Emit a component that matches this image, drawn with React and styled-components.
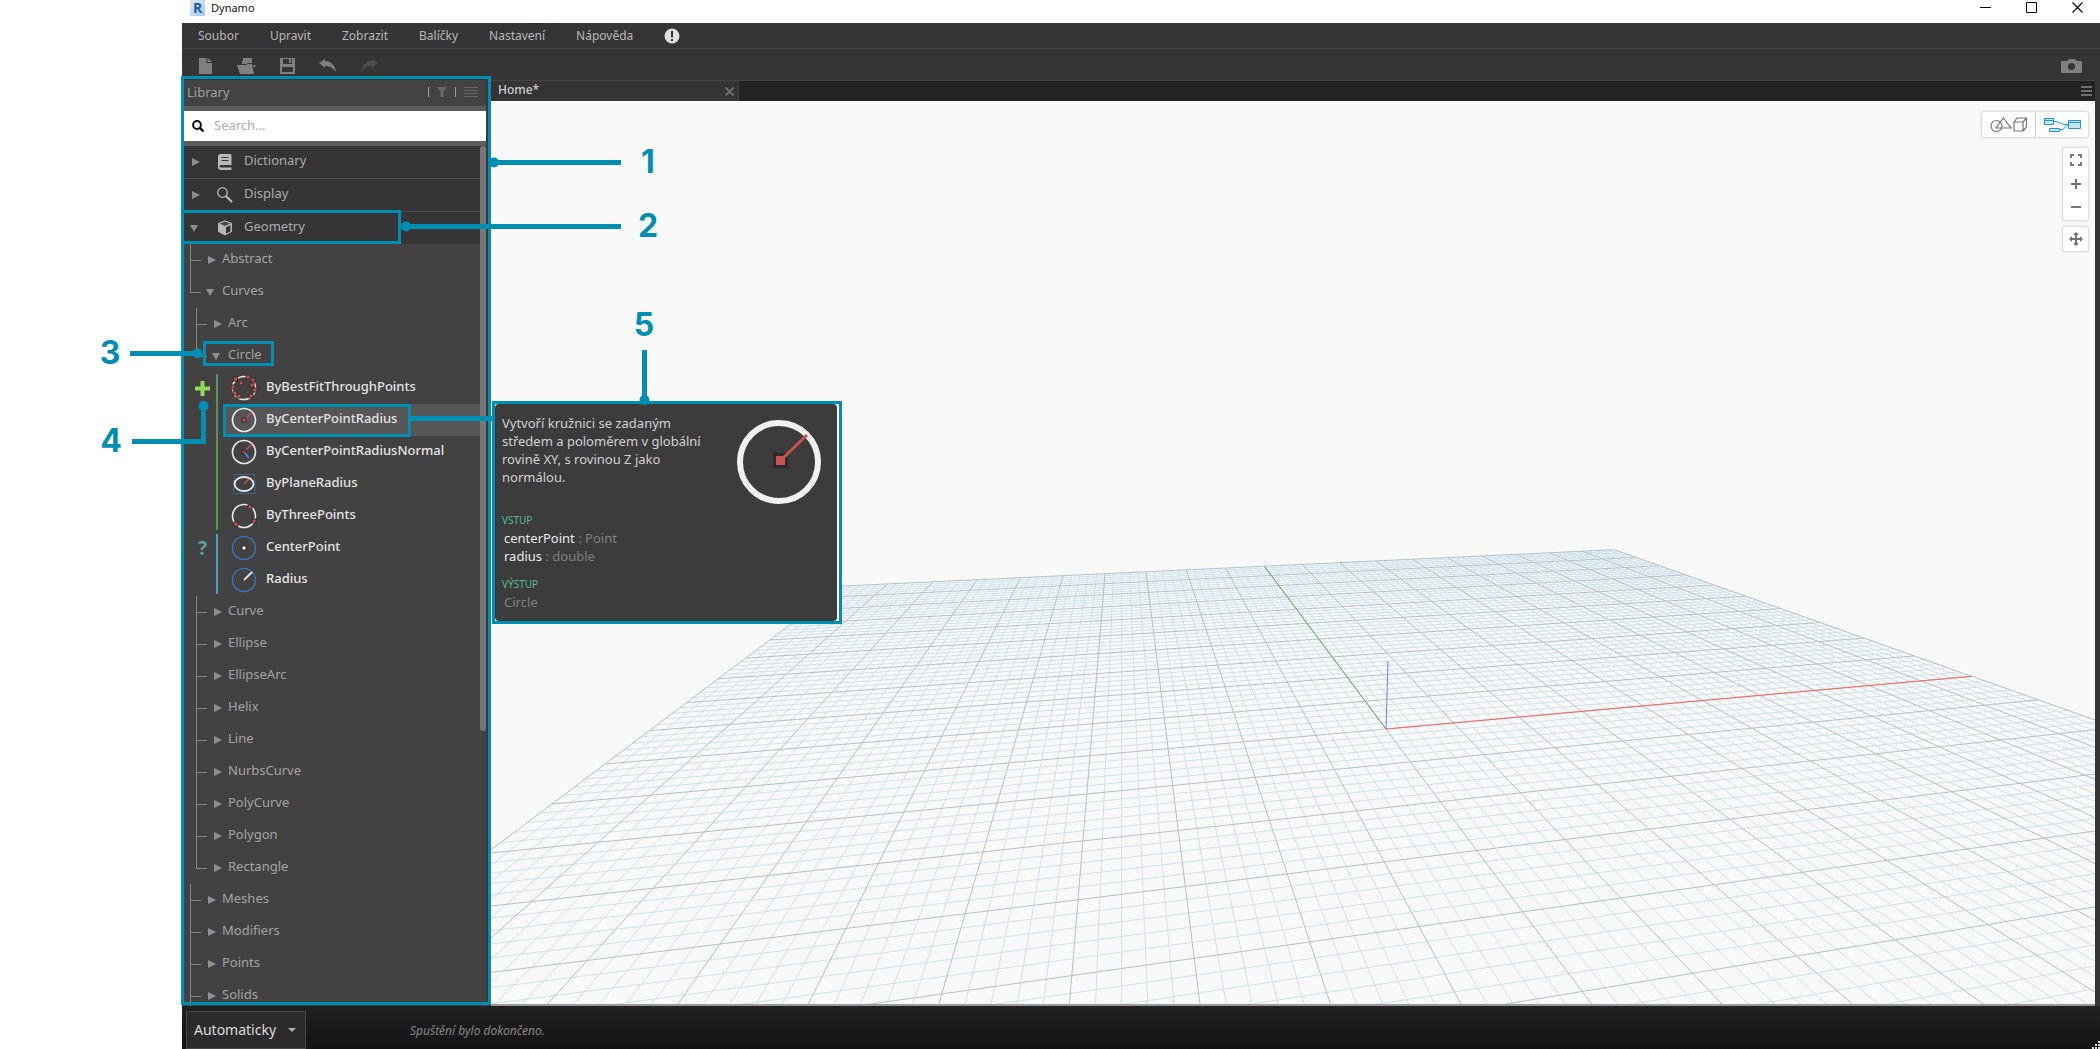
import React from "react";
import styled, { createGlobalStyle, css } from "styled-components";

const ACCENT = "#008eb3";

const GlobalStyle = createGlobalStyle`
  *, *::before, *::after { box-sizing: border-box; }
  body {
    margin: 0;
    background: #fff;
    font-family: "Noto Sans", "Open Sans", sans-serif;
    font-size: 13px;
    color: #b8b8b8;
  }
  button, input, select { font: inherit; color: inherit; margin: 0; }
  button { border: 0; background: none; padding: 0; text-align: left; cursor: pointer; }
  ul { list-style: none; margin: 0; padding: 0; }
  svg { display: block; flex: none; }
`;

/* ---------- shell ---------- */

const Page = styled.div`
  position: relative;
  height: 100vh;
  padding-left: 182px;
  overflow: hidden;
`;

const Window = styled.div`
  display: flex;
  flex-direction: column;
  height: 100%;
  background: #353535;
`;

const TitleBar = styled.header`
  display: flex;
  align-items: flex-start;
  height: 23px;
  padding-left: 8px;
  background: #fff;
  color: #111;
`;

const Logo = styled.span`
  width: 15px;
  height: 16px;
  background: linear-gradient(135deg, #dbe9f6, #a9cbea);
  color: #1d5c9e;
  font-family: "Open Sans", sans-serif;
  font-size: 14px;
  font-weight: 700;
  line-height: 16px;
  text-align: center;
`;

const Title = styled.h1`
  flex: 1;
  margin: 0 0 0 6px;
  font-size: 11px;
  font-weight: 400;
  line-height: 16px;
`;

const WindowButton = styled.button`
  display: grid;
  place-items: center;
  width: 46px;
  height: 15px;
`;

const MenuBar = styled.nav`
  display: flex;
  align-items: center;
  gap: 31px;
  height: 26px;
  padding-left: 16px;
  border-bottom: 1px solid #434343;
  font-size: 12px;
`;

const ToolBar = styled.div`
  display: flex;
  align-items: center;
  gap: 23px;
  height: 31px;
  padding: 2px 18px 0 16px;
  color: #808080;
`;

const Spacer = styled.span`
  flex: 1;
`;

const Body = styled.main`
  display: grid;
  grid-template-columns: 309px minmax(0, 1fr);
  flex: 1;
  min-height: 0;
`;

/* ---------- library ---------- */

const Library = styled.aside`
  position: relative;
  display: flex;
  flex-direction: column;
  min-height: 0;
  padding: 0 5px 0 2px;
  background: #3a3a3a;
  &::after {
    content: "";
    position: absolute;
    inset: -4px 0 1px -1px;
    border: 3px solid ${ACCENT};
    pointer-events: none;
  }
`;

const LibraryHeader = styled.div`
  display: flex;
  align-items: center;
  gap: 8px;
  height: 26px;
  padding: 0 8px 2px 3px;
  background: #434343;
  color: #a0a0a0;
`;

const LibraryTitle = styled.h2`
  flex: 1;
  margin: 0;
  font-size: 13px;
  font-weight: 400;
  line-height: 18px;
`;

const Divider = styled.span`
  width: 1px;
  height: 10px;
  background: #a0a0a0;
`;

const SearchBox = styled.label`
  display: flex;
  align-items: center;
  gap: 10px;
  height: 40px;
  padding: 0 8px;
  border: solid #5c5c5c;
  border-width: 5px 0;
  background: #fff;
  color: #111;
`;

const SearchInput = styled.input`
  flex: 1;
  min-width: 0;
  border: 0;
  padding: 0 0 2px;
  outline: 0;
  background: transparent;
  line-height: 18px;
  &::placeholder { color: #ababab; }
`;

const Scroller = styled.div`
  position: relative;
  flex: 1;
  min-height: 0;
  overflow: hidden;
  background: #424242;
`;

const ScrollThumb = styled.span`
  position: absolute;
  top: 0;
  right: 0;
  width: 6px;
  height: 68%;
  border-radius: 3px;
  background: #777;
`;

const Category = styled.button`
  position: relative;
  display: flex;
  align-items: center;
  width: 100%;
  height: ${(p) => (p.$open ? 32 : 33)}px;
  padding-left: 6px;
  border-bottom: ${(p) => (p.$open ? "0" : "1px solid #4c4c4c")};
  background: #353535;
  line-height: 18px;
  color: #ababab;
  ${(p) =>
    p.$framed &&
    css`
      &::after {
        content: "";
        position: absolute;
        inset: -2px 85px 0 -3px;
        border: 3px solid ${ACCENT};
      }
    `}
`;

const CategoryIcon = styled.span`
  display: grid;
  place-items: center;
  width: 16px;
  margin: 0 11px 0 17px;
`;

const TreeRow = styled.li`
  display: flex;
  height: 32px;
  padding-left: ${(p) => (p.$level === 1 ? 6 : 12)}px;
`;

const Branch = styled.span`
  position: relative;
  width: 11px;
  &::before {
    content: "";
    position: absolute;
    left: 0;
    top: 0;
    width: 1px;
    height: ${(p) => (p.$last ? "17px" : "100%")};
    background: #858585;
  }
  &::after {
    content: "";
    position: absolute;
    left: 0;
    top: 16px;
    width: 11px;
    height: 1px;
    background: #858585;
  }
`;

const TreeButton = styled.button`
  position: relative;
  display: flex;
  align-items: center;
  margin-left: 5px;
  padding-right: 6px;
  line-height: 18px;
  color: #a3a3a3;
  ${(p) =>
    p.$framed &&
    css`
      &::after {
        content: "";
        position: absolute;
        inset: 1px -6px 6px -9px;
        border: 3px solid ${ACCENT};
      }
    `}
`;

const ArrowBox = styled.span`
  display: flex;
  width: 10px;
  padding-left: ${(p) => (p.$open ? 0 : 2)}px;
`;

const Label = styled.span`
  padding: 0 0 4px ${(p) => p.$gap || 0}px;
`;

const MethodGroup = styled.li`
  display: grid;
  grid-template-columns: 32px 2px 1fr;
  padding-right: 6px;
`;

const GroupMark = styled.span`
  display: grid;
  place-items: center;
  height: 32px;
  padding-left: 5px;
  color: ${(p) => p.$color};
  font-size: 19px;
  font-weight: 700;
  line-height: 24px;
`;

const GroupBar = styled.span`
  margin: 2px 0;
  background: ${(p) => p.$color};
`;

const Method = styled.button`
  position: relative;
  display: flex;
  align-items: center;
  gap: 9px;
  width: calc(100% - 5px);
  height: 32px;
  margin-left: 5px;
  padding-left: 8px;
  background: ${(p) => (p.$active ? "#565656" : "transparent")};
  color: #e4e4e4;
  font-weight: 500;
  line-height: 18px;
  ${(p) =>
    p.$active &&
    css`
      &::after {
        content: "";
        position: absolute;
        inset: 0 69px -1px 0;
        border: 3px solid ${ACCENT};
      }
    `}
`;

/* ---------- workspace ---------- */

const Workspace = styled.section`
  display: flex;
  flex-direction: column;
  min-width: 0;
  min-height: 0;
  padding-right: 5px;
`;

const TabBar = styled.div`
  display: flex;
  align-items: center;
  height: 21px;
  padding-right: 3px;
  border-top: 1px solid #434343;
  background: #232323;
`;

const Tab = styled.div`
  display: flex;
  align-items: center;
  justify-content: space-between;
  width: 248px;
  height: 100%;
  padding: 0 4px 0 7px;
  border-right: 1px solid #434343;
  background: #353535;
  color: #d0d0d0;
  font-size: 12px;
  font-weight: 500;
  line-height: 16px;
`;

const TabName = styled.span`
  padding-bottom: 2px;
`;

const Canvas = styled.div`
  position: relative;
  flex: 1;
  min-height: 0;
  overflow: hidden;
  border-bottom: 2px solid #999;
  background: #f9f9f9;
`;

const Scene = styled.svg`
  width: 100%;
  height: 100%;
`;

const ViewTools = styled.div`
  position: absolute;
  top: 11px;
  right: 7px;
  display: flex;
  flex-direction: column;
  align-items: flex-end;
`;

const ToolCard = styled.div`
  display: flex;
  flex-direction: ${(p) => (p.$row ? "row" : "column")};
  margin-bottom: ${(p) => p.$gap || 0}px;
  border-radius: 2px;
  background: #fff;
  box-shadow: 0 0 2px 1px #d4d4d4;
  color: #757575;
`;

const ToolButton = styled.button`
  display: grid;
  place-items: center;
  width: ${(p) => (p.$wide ? 53 : 25)}px;
  height: ${(p) => (p.$wide ? 25 : 24)}px;
  border-left: ${(p) => (p.$divided ? "1px solid #cfcfcf" : "0")};
`;

/* ---------- tooltip ---------- */

const Tooltip = styled.div`
  position: absolute;
  left: 492px;
  top: 401px;
  width: 350px;
  height: 223px;
  border: 3px solid ${ACCENT};
  padding-right: 2px;
  background: #f9f9f9;
`;

const TooltipPanel = styled.div`
  height: 100%;
  padding: 10px 14px 0 7px;
  border-radius: 4px;
  background: #3c3c3c;
  color: #d2d2d2;
  line-height: 18px;
`;

const TooltipTop = styled.div`
  display: flex;
  justify-content: space-between;
  margin-bottom: 7px;
`;

const TooltipText = styled.p`
  width: 204px;
  margin: 0;
`;

const TooltipHeading = styled.h3`
  margin: 0;
  color: #5ab89c;
  font-size: 10px;
  font-weight: 400;
  line-height: 18px;
`;

const TooltipParam = styled.p`
  margin: 0;
  padding-left: 2px;
  color: #eaeaea;
`;

const TooltipType = styled.span`
  color: #808080;
`;

const TooltipBlock = styled.div`
  margin-bottom: 10px;
`;

/* ---------- status bar ---------- */

const StatusBar = styled.footer`
  display: flex;
  align-items: flex-end;
  justify-content: space-between;
  height: 43px;
  padding-left: 4px;
  background: linear-gradient(#222, #131313);
`;

const RunMode = styled.label`
  position: relative;
  width: 120px;
  height: 38px;
  svg { position: absolute; right: 10px; top: 17px; pointer-events: none; }
`;

const RunSelect = styled.select`
  width: 100%;
  height: 100%;
  padding: 0 0 2px 7px;
  border: 1px solid #474747;
  border-radius: 0;
  appearance: none;
  background: #2b2b2b;
  color: #dcdcdc;
  font-size: 14px;
`;

const Status = styled.p`
  flex: 1;
  margin: 0 0 9px 104px;
  color: #858585;
  font-size: 12px;
  font-style: italic;
  line-height: 18px;
`;

/* ---------- callouts ---------- */

const CalloutLines = styled.svg`
  position: absolute;
  left: 0;
  top: 0;
  pointer-events: none;
`;

const CalloutNumber = styled.span`
  position: absolute;
  left: ${(p) => p.$x}px;
  top: ${(p) => p.$y}px;
  width: 24px;
  color: ${ACCENT};
  font-family: Inter, "Open Sans", sans-serif;
  font-size: 32px;
  font-weight: 700;
  line-height: 32px;
  text-align: center;
`;

/* ---------- icons ---------- */

const Arrow = ({ open }) =>
  open ? (
    <svg width="8" height="7"><path d="M0 0h8L4 7z" fill="#8e8e8e" /></svg>
  ) : (
    <svg width="8" height="8"><path d="M0 0l8 4-8 4z" fill="#8e8e8e" /></svg>
  );

const categoryIcons = {
  Dictionary: (
    <svg width="14" height="16" viewBox="0 0 14 16">
      <path d="M2.500 0h9.500q1.500 0 1.500 1.500V11H3q-1.500 0-1.500 1.200T3 13.500h10.500V15q0 1-1 1H3q-3 0-3-3V2.500Q0 0 2.500 0z" fill="#b8b8b8" />
      <path d="M3.500 3.500h7M3.500 6.500h7" stroke="#353535" />
    </svg>
  ),
  Display: (
    <svg width="16" height="16" viewBox="0 0 16 16" fill="none" stroke="#b8b8b8">
      <circle cx="5.500" cy="5.500" r="4.800" strokeWidth="1.300" />
      <path d="M9 9l6 6" strokeWidth="2.200" />
    </svg>
  ),
  Geometry: (
    <svg width="16" height="16" viewBox="0 0 16 16" stroke="#b8b8b8" strokeLinejoin="round">
      <path d="M8 1l6.500 2.500v8L8 15 1.500 11.500v-8z" fill="#b8b8b8" />
      <path d="M8 1l6.500 2.500L8 6.500 1.500 3.500z" fill="#4a4a4a" />
      <path d="M8.500 7l5.500-2.500v7l-5.500 3z" fill="#353535" />
    </svg>
  ),
};

const Dot = ({ x, y, c = "#d94a4a" }) => (
  <g>
    <rect x={x - 2.5} y={y - 2.5} width="5" height="5" fill="#2d2d2d" />
    <rect x={x - 1.5} y={y - 1.5} width="3" height="3" fill={c} />
  </g>
);

const Ring = ({ color = "#e6e6e6", width = 1.7 }) => (
  <circle cx="13" cy="13" r="11.500" fill="none" stroke={color} strokeWidth={width} />
);

const methodIcons = {
  bestFit: (
    <>
      <Ring />
      {[[4.5, 4], [17, 2], [22, 5], [21, 10], [24, 15], [20, 21], [8, 21], [4, 18], [2, 12], [10, 8]].map(([x, y]) => (
        <Dot key={`${x}-${y}`} x={x} y={y} />
      ))}
    </>
  ),
  radius: (
    <>
      <Ring />
      <path d="M13 13l8-8" stroke="#d05050" strokeWidth="1.300" />
      <Dot x={13} y={13} />
    </>
  ),
  normal: (
    <>
      <Ring />
      <path d="M13 13l8-8" stroke="#d05050" strokeWidth="1.300" />
      <Dot x={13} y={13} c="#a84040" />
      <path d="M14 14l4 5" stroke="#3f86d0" strokeWidth="2" />
    </>
  ),
  plane: (
    <>
      <path d="M3.500 3.500h20l.5 19H2.500z" fill="none" stroke="#3f7fc4" strokeDasharray="1.500 1" />
      <ellipse cx="13" cy="13" rx="9.500" ry="7" fill="none" stroke="#e6e6e6" strokeWidth="1.800" />
      <path d="M13 13l5-5" stroke="#d05050" strokeWidth="1.300" />
    </>
  ),
  three: (
    <>
      <Ring />
      <Dot x={19} y={4} />
      <Dot x={23} y={18} />
      <Dot x={5} y={21} />
    </>
  ),
  center: (
    <>
      <Ring color="#3d6fa8" width={1.5} />
      <Dot x={13} y={13} c="#fff" />
    </>
  ),
  radiusQuery: (
    <>
      <Ring color="#3d6fa8" width={1.5} />
      <path d="M13 13l8-8" stroke="#e6e6e6" strokeWidth="1.800" />
    </>
  ),
};

/* ---------- data ---------- */

const categories = [
  { name: "Dictionary" },
  { name: "Display" },
  { name: "Geometry", open: true, framed: true },
];

const tree = [
  { name: "Abstract", level: 1 },
  { name: "Curves", level: 1, open: true, last: true },
  { name: "Arc", level: 2 },
  { name: "Circle", level: 2, open: true, last: true, framed: true },
  {
    mark: "plus",
    color: "#5f8f5a",
    methods: [
      { name: "ByBestFitThroughPoints", icon: "bestFit" },
      { name: "ByCenterPointRadius", icon: "radius", active: true },
      { name: "ByCenterPointRadiusNormal", icon: "normal" },
      { name: "ByPlaneRadius", icon: "plane" },
      { name: "ByThreePoints", icon: "three" },
    ],
  },
  {
    mark: "query",
    color: "#4a9cc4",
    methods: [
      { name: "CenterPoint", icon: "center" },
      { name: "Radius", icon: "radiusQuery" },
    ],
  },
  { name: "Curve", level: 2 },
  { name: "Ellipse", level: 2 },
  { name: "EllipseArc", level: 2 },
  { name: "Helix", level: 2 },
  { name: "Line", level: 2 },
  { name: "NurbsCurve", level: 2 },
  { name: "PolyCurve", level: 2 },
  { name: "Polygon", level: 2 },
  { name: "Rectangle", level: 2, last: true },
  { name: "Meshes", level: 1 },
  { name: "Modifiers", level: 1 },
  { name: "Points", level: 1 },
  { name: "Solids", level: 1 },
];

const menu = ["Soubor", "Upravit", "Zobrazit", "Balíčky", "Nastavení", "Nápověda"];

/* ---------- ground grid ---------- */

const HORIZON = 274;
const ORIGIN = [895, 628];
const VANISH_X = [4830, HORIZON];
const VANISH_Y = [630.5, HORIZON];
const KX = 0.01749;
const KY = 0.08515;

function project(x, y) {
  const a = KX * x;
  const b = KY * y;
  const w = 1 + a + b;
  return [
    (ORIGIN[0] + a * VANISH_X[0] + b * VANISH_Y[0]) / w,
    (ORIGIN[1] + a * VANISH_X[1] + b * VANISH_Y[1]) / w,
  ];
}

/* Lines stop here, in front of the camera plane. */
const NEAR = 0.3;

function segment(p, q) {
  return `M${p[0].toFixed(2)} ${p[1].toFixed(2)}L${q[0].toFixed(2)} ${q[1].toFixed(2)}`;
}

function gridPath(major) {
  const parts = [];
  for (let i = -50; i <= 50; i += 1) {
    if ((i % 5 === 0) !== major) continue;
    const v = i / 5;
    const yStart = Math.max(-10, (NEAR - 1 - KX * v) / KY);
    parts.push(segment(project(v, yStart), project(v, 10)));
    const xStart = Math.max(-10, (NEAR - 1 - KY * v) / KX);
    if (xStart < 10) parts.push(segment(project(xStart, v), project(10, v)));
  }
  return parts.join("");
}

const minorPath = gridPath(false);
const majorPath = gridPath(true);

function Ground() {
  const red = project(10, 0);
  const green = project(0, 10);
  return (
    <Scene viewBox="0 0 1604 903" preserveAspectRatio="xMidYMid slice" aria-hidden="true" fill="none">
      <path d={minorPath} stroke="#cfe2ec" />
      <path d={majorPath} stroke="#b4c1c9" />
      <path d={segment(ORIGIN, red)} stroke="#ff6060" />
      <path d={segment(ORIGIN, green)} stroke="#55b055" />
      <path d="M895 628L897 560" stroke="#7a7af0" />
    </Scene>
  );
}

/* ---------- parts ---------- */

function TreeItem({ item }) {
  if (item.methods) {
    return (
      <MethodGroup>
        <GroupMark $color={item.mark === "plus" ? "#8fdb55" : "#5f9ea0"}>
          {item.mark === "plus" ? (
            <svg width="15" height="15"><path d="M7.500 0v15M0 7.500h15" stroke="#8fdb55" strokeWidth="4" /></svg>
          ) : (
            "?"
          )}
        </GroupMark>
        <GroupBar $color={item.color} />
        <ul>
          {item.methods.map((m) => (
            <li key={m.name}>
              <Method $active={m.active}>
                <svg width="26" height="26" viewBox="0 0 26 26">{methodIcons[m.icon]}</svg>
                <Label>{m.name}</Label>
              </Method>
            </li>
          ))}
        </ul>
      </MethodGroup>
    );
  }
  return (
    <TreeRow $level={item.level}>
      <Branch $last={item.last} />
      <TreeButton $framed={item.framed} aria-expanded={!!item.open}>
        <ArrowBox $open={item.open}><Arrow open={item.open} /></ArrowBox>
        <Label $gap={6}>{item.name}</Label>
      </TreeButton>
    </TreeRow>
  );
}

function LibraryPanel() {
  return (
    <Library>
      <LibraryHeader>
        <LibraryTitle>Library</LibraryTitle>
        <Divider />
        <button aria-label="Filter">
          <svg width="10" height="10"><path d="M0 0h10L6.500 5v5h-3V5z" fill="#666" /></svg>
        </button>
        <Divider />
        <button aria-label="Layout">
          <svg width="14" height="11"><path d="M0 .5h14M0 3.500h14M0 6.500h14M0 9.500h14" stroke="#666" /></svg>
        </button>
      </LibraryHeader>
      <SearchBox>
        <svg width="12" height="12" fill="none" stroke="#111">
          <circle cx="5" cy="5" r="3.900" strokeWidth="2" />
          <path d="M7.800 7.800l3.700 3.700" strokeWidth="2.400" />
        </svg>
        <SearchInput type="text" placeholder="Search..." aria-label="Search" />
      </SearchBox>
      <Scroller>
        {categories.map((c) => (
          <Category key={c.name} $open={c.open} $framed={c.framed}>
            <ArrowBox $open={c.open}><Arrow open={c.open} /></ArrowBox>
            <CategoryIcon>{categoryIcons[c.name]}</CategoryIcon>
            <Label>{c.name}</Label>
          </Category>
        ))}
        <ul>
          {tree.map((item) => (
            <TreeItem key={item.name || item.mark} item={item} />
          ))}
        </ul>
        <ScrollThumb />
      </Scroller>
    </Library>
  );
}

function WorkspacePanel() {
  return (
    <Workspace>
      <TabBar>
        <Tab>
          <TabName>Home*</TabName>
          <button aria-label="Close tab">
            <svg width="9" height="9"><path d="M.5 .5l8 8M8.500 .5l-8 8" stroke="#757575" strokeWidth="1.600" /></svg>
          </button>
        </Tab>
        <Spacer />
        <button aria-label="Tabs">
          <svg width="11" height="10"><path d="M0 1h11M0 5h11M0 9h11" stroke="#707070" strokeWidth="2" /></svg>
        </button>
      </TabBar>
      <Canvas>
        <Ground />
        <ViewTools>
          <ToolCard $row $gap={11}>
            <ToolButton $wide aria-label="Geometry view">
              <svg width="37" height="15" fill="none" stroke="#757575" strokeWidth="1.200">
                <circle cx="6.500" cy="9" r="5.500" />
                <path d="M13.500 1l7.500 10H6zM24 5h9v9h-9zM24 5l3-4h9.500v9L33 14M33 5l3.500-4" />
              </svg>
            </ToolButton>
            <ToolButton $wide $divided aria-label="Graph view">
              <svg width="37" height="15" fill="#c9e6fb" stroke="#1795f0">
                <path d="M9 4.500h3l8 3h5M15 12.500h3c3 0 2-4 7-4" fill="none" />
                <path d="M.5 1.500h9v6h-9zM5.500 11.500h10v3h-10zM24.500 3.500h12v8h-12zM.5 3.500h9M24.500 5.500h12" />
              </svg>
            </ToolButton>
          </ToolCard>
          <ToolCard $gap={7}>
            <ToolButton aria-label="Fit to screen">
              <svg width="12" height="12" fill="none" stroke="#757575" strokeWidth="2">
                <path d="M1 4V1h3M8 1h3v3M11 8v3H8M4 11H1V8" />
              </svg>
            </ToolButton>
            <ToolButton aria-label="Zoom in">
              <svg width="10" height="10"><path d="M5 0v10M0 5h10" stroke="#757575" strokeWidth="2" /></svg>
            </ToolButton>
            <ToolButton aria-label="Zoom out">
              <svg width="10" height="10"><path d="M0 4h10" stroke="#757575" strokeWidth="2" /></svg>
            </ToolButton>
          </ToolCard>
          <ToolCard>
            <ToolButton aria-label="Pan">
              <svg width="14" height="14" fill="#757575">
                <path d="M7 0l3 3H8v3h3V4l3 3-3 3V8H8v3h2l-3 3-3-3h2V8H3v2L0 7l3-3v2h3V3H4z" />
              </svg>
            </ToolButton>
          </ToolCard>
        </ViewTools>
      </Canvas>
    </Workspace>
  );
}

function NodeTooltip() {
  return (
    <Tooltip role="tooltip">
      <TooltipPanel>
        <TooltipTop>
          <TooltipText>Vytvoří kružnici se zadaným středem a poloměrem v globální rovině XY, s rovinou Z jako normálou.</TooltipText>
          <svg width="88" height="90" viewBox="0 0 88 90">
            <circle cx="44" cy="48" r="39" fill="none" stroke="#f0f0f0" strokeWidth="6" />
            <rect x="38" y="39" width="15" height="15" fill="#2a2a2a" />
            <path d="M46 46l26-25" stroke="#c75450" strokeWidth="3" />
            <rect x="41" y="42" width="9" height="9" fill="#c75450" />
          </svg>
        </TooltipTop>
        <TooltipBlock>
          <TooltipHeading>VSTUP</TooltipHeading>
          <TooltipParam>centerPoint <TooltipType>: Point</TooltipType></TooltipParam>
          <TooltipParam>radius <TooltipType>: double</TooltipType></TooltipParam>
        </TooltipBlock>
        <TooltipHeading>VÝSTUP</TooltipHeading>
        <TooltipParam><TooltipType>Circle</TooltipType></TooltipParam>
      </TooltipPanel>
    </Tooltip>
  );
}

function Callouts() {
  return (
    <>
      <CalloutLines width="700" height="500" fill="none" stroke={ACCENT} strokeWidth="5" aria-hidden="true">
        <path d="M495 162.500H621M406 226.500H621M644.500 350V400M130 353.500H198M132 441.500H203.500V406M411 418.500H495" />
        <g fill={ACCENT} stroke="none">
          <circle cx="494" cy="162.500" r="5" />
          <circle cx="406" cy="226.500" r="5" />
          <circle cx="197.500" cy="353.500" r="5" />
          <circle cx="203.500" cy="406" r="5" />
          <circle cx="644.500" cy="400" r="5" />
        </g>
      </CalloutLines>
      <CalloutNumber $x={636} $y={146}>1</CalloutNumber>
      <CalloutNumber $x={636} $y={210}>2</CalloutNumber>
      <CalloutNumber $x={98} $y={337}>3</CalloutNumber>
      <CalloutNumber $x={99} $y={425}>4</CalloutNumber>
      <CalloutNumber $x={632} $y={309}>5</CalloutNumber>
    </>
  );
}

export default function App() {
  return (
    <>
      <GlobalStyle />
      <Page>
        <Window>
          <TitleBar>
            <Logo aria-hidden="true">R</Logo>
            <Title>Dynamo</Title>
            <WindowButton aria-label="Minimize">
              <svg width="11" height="11"><path d="M0 5.500h11" stroke="#000" /></svg>
            </WindowButton>
            <WindowButton aria-label="Maximize">
              <svg width="11" height="11"><path d="M.5 .5h10v10H.5z" fill="none" stroke="#000" /></svg>
            </WindowButton>
            <WindowButton aria-label="Close">
              <svg width="11" height="11"><path d="M.5 .5l10 10M10.500 .5l-10 10" stroke="#000" strokeWidth="1.200" /></svg>
            </WindowButton>
          </TitleBar>
          <MenuBar>
            {menu.map((m) => (
              <button key={m}>{m}</button>
            ))}
            <button aria-label="Notifications">
              <svg width="16" height="16">
                <circle cx="8" cy="8" r="7.500" fill="#e0e0e0" />
                <path d="M8 3v6.500M8 11v2" stroke="#353535" strokeWidth="2" />
              </svg>
            </button>
          </MenuBar>
          <ToolBar>
            <button aria-label="New">
              <svg width="16" height="16"><path d="M1 0h7.500v5H14v11H1zM9.500 0L14 4H9.500z" fill="#808080" /></svg>
            </button>
            <button aria-label="Open">
              <svg width="20" height="16">
                <path d="M6 0h9v5h-4L9.500 6H5V3h1zM0 7h9l1.500-1H15l2 10H3zM16 7h3l-2 3z" fill="#808080" />
              </svg>
            </button>
            <button aria-label="Save">
              <svg width="16" height="16">
                <path d="M0 0h15v16H0z" fill="#808080" />
                <path d="M3 1h9v5H3zM2 9h11v5H2z" fill="#353535" />
                <path d="M9 1h2v4H9z" fill="#808080" />
              </svg>
            </button>
            <button aria-label="Undo">
              <svg width="18" height="16"><path d="M0 5l6-4v2c6 0 10 4 11 11-3-4-6-6-11-6v2z" fill="#808080" /></svg>
            </button>
            <button aria-label="Redo">
              <svg width="18" height="16"><path d="M18 5l-6-4v2C6 3 2 7 1 14c3-4 6-6 11-6v2z" fill="#4a4f4c" /></svg>
            </button>
            <Spacer />
            <button aria-label="Export image">
              <svg width="21" height="14">
                <path d="M1 2h5l2-2h6l2 2h4q1 0 1 1v10q0 1-1 1H1q-1 0-1-1V3q0-1 1-1z" fill="#808080" />
                <circle cx="10.500" cy="7.500" r="3.500" fill="#353535" />
              </svg>
            </button>
          </ToolBar>
          <Body>
            <LibraryPanel />
            <WorkspacePanel />
          </Body>
          <StatusBar>
            <RunMode>
              <RunSelect aria-label="Run mode" defaultValue="auto">
                <option value="auto">Automaticky</option>
                <option value="manual">Ručně</option>
              </RunSelect>
              <svg width="8" height="5"><path d="M0 0h8L4 4z" fill="#b0b0b0" /></svg>
            </RunMode>
            <Status>Spuštění bylo dokončeno.</Status>
            <svg width="8" height="8" fill="#ddd">
              <path d="M6 0h2v2H6zM3 3h2v2H3zM6 3h2v2H6zM0 6h2v2H0zM3 6h2v2H3zM6 6h2v2H6z" />
            </svg>
          </StatusBar>
        </Window>
        <NodeTooltip />
        <Callouts />
      </Page>
    </>
  );
}
